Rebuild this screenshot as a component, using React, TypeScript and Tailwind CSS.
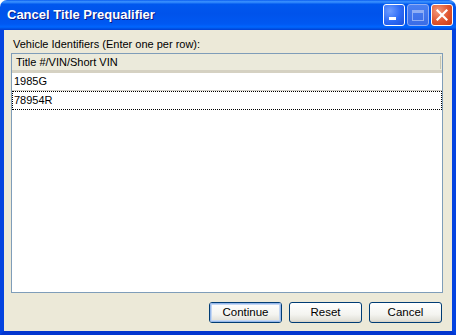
import React from 'react';

const ui = { fontFamily: 'Tahoma, "Liberation Sans", Arial, sans-serif' };

function XpButton({ label, isDefault }: { label: string; isDefault?: boolean }) {
  return (
    <button
      type="button"
      className="w-[73px] h-[21px] rounded-[3px] border border-[#003C74] text-[11.5px] text-black flex items-center justify-center bg-[linear-gradient(180deg,#FFFFFF_0%,#F4F4F0_60%,#E3E2DA_90%,#D6D0C5_100%)]"
      style={ui}
    >
      <span
        className={
          isDefault
            ? 'w-full h-full rounded-[2px] flex items-center justify-center shadow-[inset_0_0_0_1px_#97B8EA,inset_0_0_0_2px_#C4D7F3]'
            : 'w-full h-full flex items-center justify-center'
        }
      >
        {label}
      </span>
    </button>
  );
}

export default function App() {
  return (
    <div className="w-[456px] h-[335px] flex flex-col bg-white">
      <div className="h-[30px] shrink-0 rounded-t-[7px] flex items-center pl-[7px] pr-[3px] bg-[linear-gradient(180deg,#0A5DF0_0%,#3D95FF_6%,#0058EE_14%,#0053EB_45%,#0058F2_80%,#0066FF_90%,#0050E0_96%,#003DD7_100%)]">
        <div
          className="flex-1 text-white font-bold text-[13px] [text-shadow:1px_1px_0_#0A1883]"
          style={{ fontFamily: '"Trebuchet MS", "Liberation Sans", sans-serif' }}
        >
          Cancel Title Prequalifier
        </div>
        <div className="flex gap-[2px] items-center">
          <div className="w-[22px] h-[22px] rounded-[3px] border border-white flex items-end pl-[5px] pb-[5px] bg-[radial-gradient(circle_at_30%_30%,#6E9DFF_0%,#2C6AF6_55%,#1D4FD8_100%)]">
            <div className="w-[7px] h-[3px] bg-white" />
          </div>
          <div className="w-[22px] h-[22px] rounded-[3px] border border-[#8FAEF5] flex items-center justify-center bg-[linear-gradient(180deg,#4A80F2_0%,#3A6CE6_100%)]">
            <div className="w-[12px] h-[11px] border border-[#8FAEF5] border-t-[3px]" />
          </div>
          <div className="w-[22px] h-[22px] rounded-[3px] border border-white flex items-center justify-center bg-[radial-gradient(circle_at_30%_30%,#F3997C_0%,#E0552F_55%,#C83A17_100%)]">
            <svg width="12" height="12" viewBox="0 0 12 12">
              <path d="M1.5 1.5 L10.5 10.5 M10.5 1.5 L1.5 10.5" stroke="white" strokeWidth="2.2" strokeLinecap="square" />
            </svg>
          </div>
        </div>
      </div>

      <div className="flex-1 flex flex-col border-x-4 border-b-4 border-x-[#0343E0] border-b-[#0336CF] bg-[#ECE9D8] px-[7px]" style={ui}>
        <div className="h-[23px] flex items-end pb-[3px] pl-[2px] text-[11px] text-black leading-none">
          Vehicle Identifiers (Enter one per row):
        </div>
        <div className="h-[240px] border border-[#7F9DB9] bg-white flex flex-col mr-[2px]">
          <div className="h-[19px] flex items-center bg-[#EBEADB] border-b-[3px] border-b-[#D5D1C2] pl-[4px] text-[11px] text-black">
            <div className="flex-1">Title #/VIN/Short VIN</div>
            <div className="w-[1px] h-[13px] bg-[#C7C5B2] mr-[1px]" />
          </div>
          <div className="h-[18px] flex items-center pl-[2px] text-[11px] text-black border-b border-b-[#D4D0C8]">
            1985G
          </div>
          <div className="h-[19px] flex items-center pl-[1px] text-[11px] text-black border border-dotted border-black">
            78954R
          </div>
        </div>
        <div className="flex justify-end gap-[7px] pt-[9px] pr-[3px]">
          <XpButton label="Continue" isDefault />
          <XpButton label="Reset" />
          <XpButton label="Cancel" />
        </div>
      </div>
    </div>
  );
}
